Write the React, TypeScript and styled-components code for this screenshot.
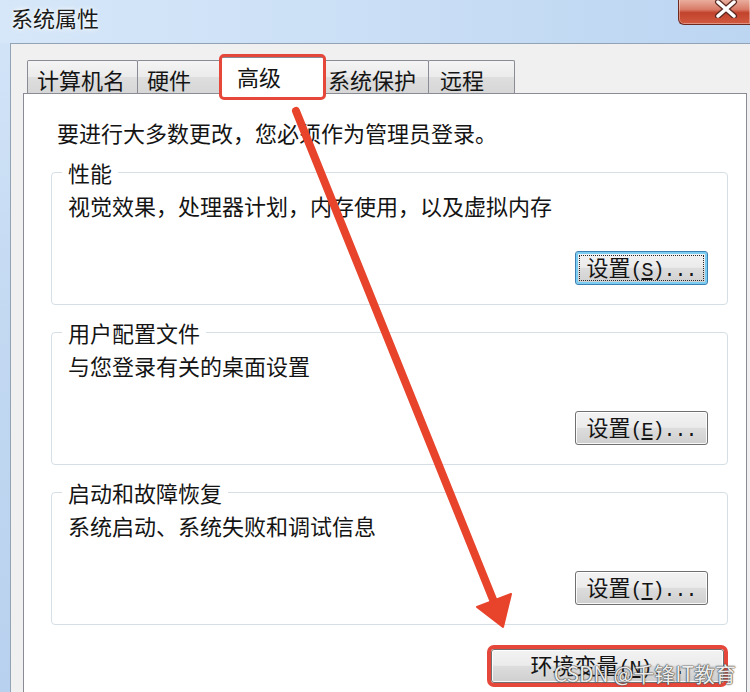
import React from 'react';
import styled, { createGlobalStyle } from 'styled-components';

const GlobalStyle = createGlobalStyle`
  html, body {
    margin: 0;
    padding: 0;
  }
  body {
    width: 750px;
    height: 692px;
    overflow: hidden;
    font-family: "Noto Sans CJK SC", "Noto Sans", sans-serif;
    color: #141414;
  }
`;

// Outer aero frame
const Window = styled.div`
  position: relative;
  width: 750px;
  height: 692px;
  overflow: hidden;
  display: flex;
  flex-direction: column;
  background: linear-gradient(180deg, #d4e5f8 0%, #c3d9f2 45%, #b8d1ee 100%);
`;

const TitleBar = styled.div`
  flex: none;
  height: 43px;
  display: flex;
  align-items: flex-start;
  padding-left: 11px;
  background: linear-gradient(90deg, #d6e7f9 0%, #c9def5 55%, #bcd5f1 100%);
`;

const Title = styled.div`
  margin-top: 4px;
  font-size: 22px;
  line-height: 26px;
  color: #1a1a1a;
  text-shadow: 0 0 6px #ffffff, 0 0 3px #ffffff;
`;

const CloseButton = styled.div`
  margin-left: auto;
  margin-top: -1px;
  width: 72px;
  height: 26px;
  box-sizing: border-box;
  display: flex;
  align-items: flex-start;
  padding: 1px 0 0 35px;
  border: 1px solid #6f2a20;
  border-top: none;
  border-right: none;
  border-radius: 0 0 0 6px;
  background: linear-gradient(180deg, #eab3a4 0%, #d97a66 42%, #c2432c 55%, #d15a40 100%);
  box-shadow: inset 0 0 0 1px rgba(255, 255, 255, 0.35);
`;

// Dialog client area
const Body = styled.div`
  flex: 1;
  min-height: 0;
  display: flex;
  flex-direction: column;
  margin-left: 10px;
  padding: 13px 3px 0 12px;
  background: #f0f0f0;
  border-left: 1px solid #93a3b6;
  border-top: 1px solid #93a3b6;
`;

const TabStrip = styled.div`
  flex: none;
  position: relative;
  z-index: 2;
  height: 36px;
  display: flex;
  align-items: flex-end;
  padding-left: 4px;
`;

const Tab = styled.div<{ $w: number; $pad: number; $active?: boolean; $flagged?: boolean }>`
  position: relative;
  box-sizing: border-box;
  flex: none;
  width: ${p => p.$w}px;
  height: ${p => (p.$active ? 37 : 33)}px;
  margin-left: -1px;
  margin-bottom: ${p => (p.$active ? -1 : 0)}px;
  padding: 5px 0 0 ${p => p.$pad}px;
  border: 1px solid #898c95;
  border-bottom: none;
  border-radius: 2px 2px 0 0;
  font-size: 22px;
  line-height: 26px;
  white-space: nowrap;
  background: ${p =>
    p.$active ? '#ffffff' : 'linear-gradient(180deg, #f4f4f4 0%, #ebebeb 50%, #dedede 51%, #d6d6d6 100%)'};
  z-index: ${p => (p.$active ? 2 : 1)};

  &:first-child {
    margin-left: 0;
  }

  ${p =>
    p.$active &&
    `
    margin-left: -3px;
    margin-right: -2px;
  `}

  ${p =>
    p.$flagged &&
    `
    &::after {
      content: '';
      position: absolute;
      top: -4px;
      left: -2px;
      right: -2px;
      bottom: -6px;
      border: 3px solid #e5473a;
      border-radius: 5px;
      pointer-events: none;
    }
  `}
`;

const Panel = styled.div`
  flex: 1;
  position: relative;
  z-index: 1;
  display: flex;
  flex-direction: column;
  background: #ffffff;
  border: 1px solid #898c95;
  border-bottom: none;
  padding: 25px 18px 0 27px;
`;

const Notice = styled.div`
  margin-left: 6px;
  font-size: 22px;
  line-height: 26px;
`;

const GroupBox = styled.fieldset`
  margin: 14px 0 0;
  min-width: 0;
  padding: 7px 19px 19px 16px;
  border: 1px solid #d5dfe5;
  border-radius: 4px;
`;

const Legend = styled.legend`
  margin-left: -6px;
  padding: 0 6px;
  font-size: 22px;
  line-height: 26px;
`;

const Desc = styled.div`
  font-size: 22px;
  line-height: 26px;
`;

const ButtonRow = styled.div<{ $gap: number }>`
  display: flex;
  justify-content: flex-end;
  margin-top: ${p => p.$gap}px;
`;

const Button = styled.div<{ $w: number; $focused?: boolean; $flagged?: boolean }>`
  position: relative;
  box-sizing: border-box;
  width: ${p => p.$w}px;
  height: 34px;
  display: flex;
  align-items: center;
  justify-content: center;
  font-size: 22px;
  line-height: 26px;
  white-space: nowrap;
  color: #141414;
  border: 1px solid ${p => (p.$focused ? '#3c7fb1' : '#707070')};
  border-radius: 3px;
  background: linear-gradient(180deg, #f3f3f3 0%, #ebebeb 48%, #dddddd 50%, #cfcfcf 100%);
  box-shadow: ${p =>
    p.$focused ? 'inset 0 0 0 2px #7ccdf3' : 'inset 0 0 0 1px rgba(255, 255, 255, 0.85)'};

  ${p =>
    p.$focused &&
    `
    &::after {
      content: '';
      position: absolute;
      inset: 3px;
      border: 1px dotted #2a2a2a;
      pointer-events: none;
    }
  `}

  ${p =>
    p.$flagged &&
    `
    margin-right: 4px;
    outline: 4px solid #e5473a;
    outline-offset: 0;
  `}
`;

// half-width latin part of the button captions, as SimSun draws it
const Key = styled.span`
  font-family: "Liberation Mono", "DejaVu Sans Mono", monospace;
  font-size: 20px;
  letter-spacing: -1px;
`;

const Underlined = styled.span`
  text-decoration: underline;
  text-underline-offset: 2px;
`;

const Watermark = styled.div`
  position: absolute;
  right: 14px;
  bottom: 7px;
  z-index: 6;
  font-size: 21px;
  line-height: 24px;
  color: rgba(255, 255, 255, 0.92);
  text-shadow: 0 0 1px #3a3a3a, 0 0 1px #3a3a3a, 0 0 2px #666;
  pointer-events: none;
  white-space: nowrap;
`;

const ArrowLayer = styled.svg`
  position: absolute;
  top: 0;
  left: 0;
  z-index: 5;
  pointer-events: none;
`;

const tabs = [
  { label: '计算机名', w: 111, pad: 9 },
  { label: '硬件', w: 86, pad: 9 },
  { label: '高级', w: 105, pad: 16, active: true },
  { label: '系统保护', w: 107, pad: 5 },
  { label: '远程', w: 87, pad: 11 },
];

const groups = [
  { title: '性能', desc: '视觉效果，处理器计划，内存使用，以及虚拟内存', key: 'S', focused: true },
  { title: '用户配置文件', desc: '与您登录有关的桌面设置', key: 'E' },
  { title: '启动和故障恢复', desc: '系统启动、系统失败和调试信息', key: 'T' },
];

const ButtonLabel = ({ text, hotkey }: { text: string; hotkey: string }) => (
  <span>
    {text}
    <Key>
      (<Underlined>{hotkey}</Underlined>)...
    </Key>
  </span>
);

export default function App() {
  return (
    <>
      <GlobalStyle />
      <Window>
        <TitleBar>
          <Title>系统属性</Title>
          <CloseButton>
            <svg width="24" height="18" viewBox="0 0 24 18">
              <path d="M4 2 L20 16 M20 2 L4 16" stroke="#5a2a22" strokeWidth="6" strokeLinecap="round" />
              <path d="M4 2 L20 16 M20 2 L4 16" stroke="#ffffff" strokeWidth="3.5" strokeLinecap="round" />
            </svg>
          </CloseButton>
        </TitleBar>

        <Body>
          <TabStrip>
            {tabs.map(t => (
              <Tab key={t.label} $w={t.w} $pad={t.pad} $active={t.active} $flagged={t.active}>
                {t.label}
              </Tab>
            ))}
          </TabStrip>

          <Panel>
            <Notice>要进行大多数更改，您必须作为管理员登录。</Notice>

            {groups.map(g => (
              <GroupBox key={g.title}>
                <Legend>{g.title}</Legend>
                <Desc>{g.desc}</Desc>
                <ButtonRow $gap={33}>
                  <Button $w={133} $focused={g.focused}>
                    <ButtonLabel text="设置" hotkey={g.key} />
                  </Button>
                </ButtonRow>
              </GroupBox>
            ))}

            <ButtonRow $gap={24}>
              <Button $w={233} $flagged>
                <ButtonLabel text="环境变量" hotkey="N" />
              </Button>
            </ButtonRow>
          </Panel>
        </Body>

        <ArrowLayer width="750" height="692" viewBox="0 0 750 692">
          <line x1="296" y1="111" x2="494" y2="602" stroke="#e8432b" strokeWidth="8" strokeLinecap="round" />
          <polygon points="503,627 511,594 477,607" fill="#e8432b" stroke="#e8432b" strokeWidth="2" strokeLinejoin="round" />
        </ArrowLayer>

        <Watermark>CSDN @千锋IT教育</Watermark>
      </Window>
    </>
  );
}
